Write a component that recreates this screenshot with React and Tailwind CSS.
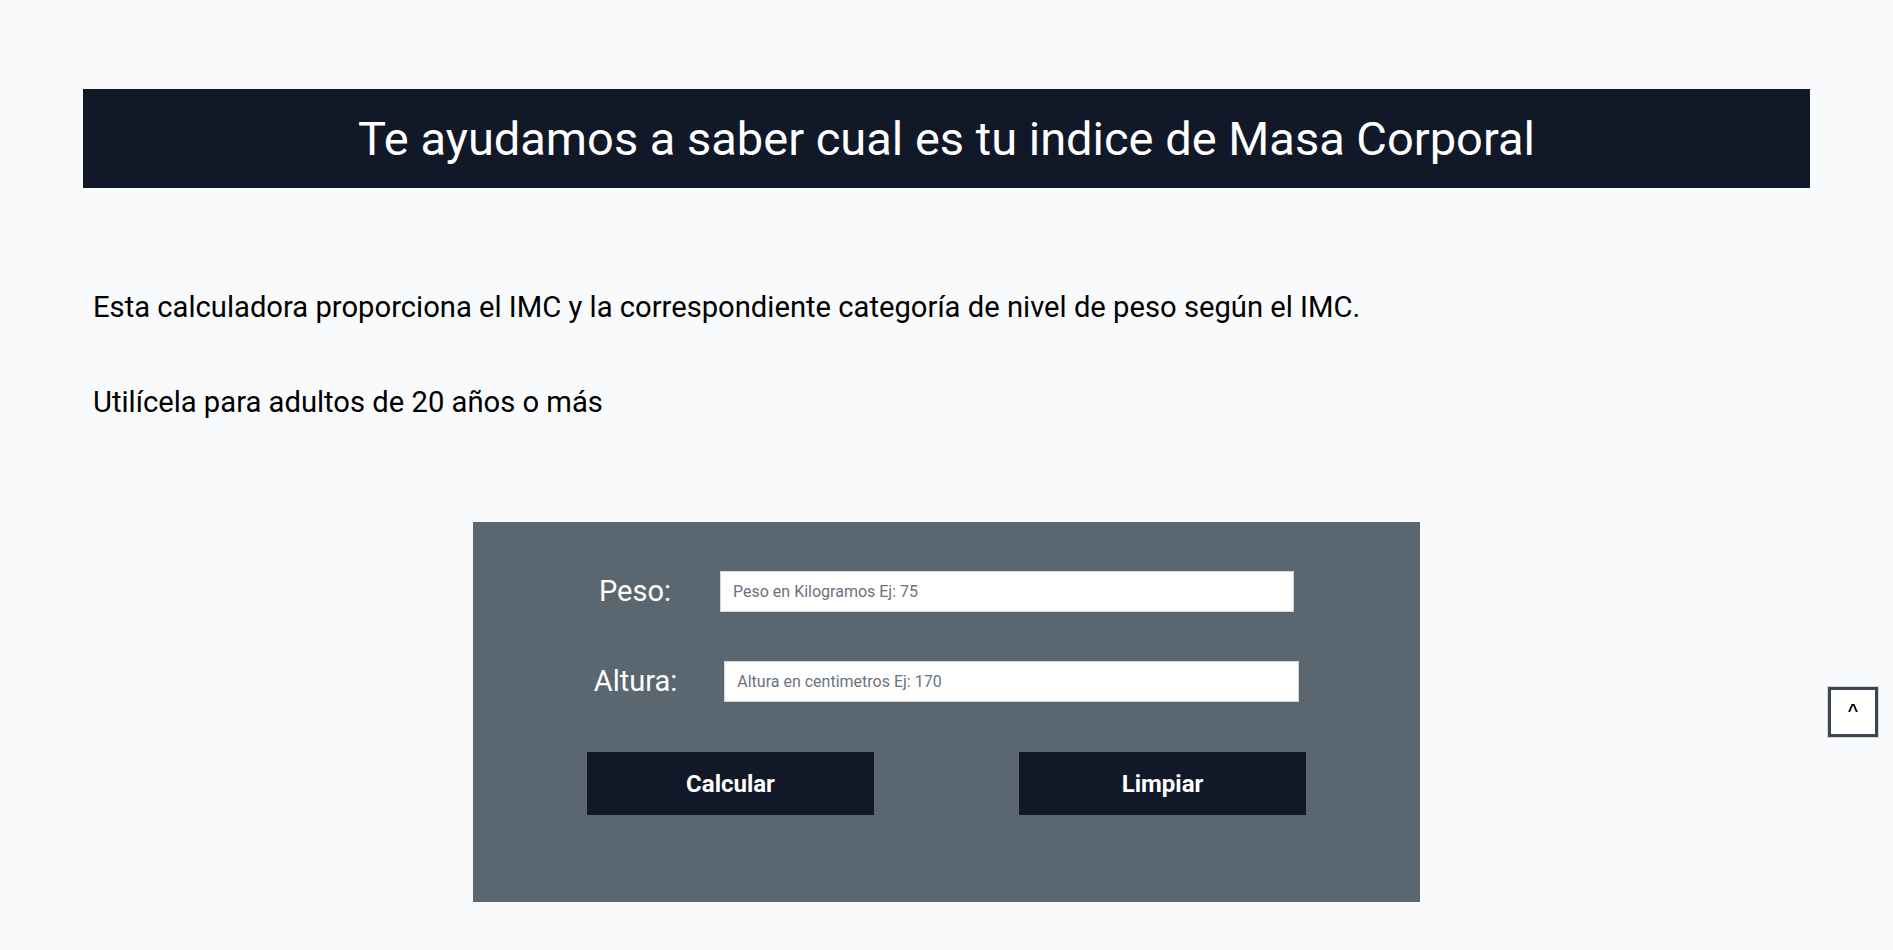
import React, { useState } from 'react';

export default function App() {
  const [peso, setPeso] = useState('');
  const [altura, setAltura] = useState('');

  const limpiar = () => {
    setPeso('');
    setAltura('');
  };

  return (
    <div className="min-h-screen bg-[#f9fafb] pt-[89px] font-['Roboto',sans-serif] text-black">
      {/* Encabezado */}
      <header className="mx-[83px] h-[99px] bg-[#111827] flex items-center justify-center">
        <h1 className="text-[47px] leading-none text-white font-normal">
          Te ayudamos a saber cual es tu indice de Masa Corporal
        </h1>
      </header>

      <section className="mx-[83px] px-[10px] pt-[100px] text-[29.2px] leading-[39px]">
        <p>Esta calculadora proporciona el IMC y la correspondiente categoría de nivel de peso según el IMC.</p>
        <p className="mt-[56px]">Utilícela para adultos de 20 años o más</p>
      </section>

      {/* Calculadora */}
      <div className="w-1/2 mx-auto mt-[100px] bg-[#5a6670] pt-[48px] pb-[87px]">
        <div className="flex items-center justify-center gap-[49px]">
          <label className="text-[29px] text-white">Peso:</label>
          <input
            value={peso}
            onChange={(e) => setPeso(e.target.value)}
            placeholder="Peso en Kilogramos Ej: 75"
            className="w-[574px] h-[41px] bg-white border border-gray-300 px-[12px] text-[16px] text-gray-800 placeholder:text-[#6b7280] outline-none"
          />
        </div>
        <div className="flex items-center justify-center gap-[47px] mt-[46px]">
          <label className="text-[29px] text-white">Altura:</label>
          <input
            value={altura}
            onChange={(e) => setAltura(e.target.value)}
            placeholder="Altura en centimetros Ej: 170"
            className="w-[575px] h-[41px] bg-white border border-gray-300 px-[12px] text-[16px] text-gray-800 placeholder:text-[#6b7280] outline-none"
          />
        </div>
        <div className="flex justify-center gap-[145px] mt-[49px]">
          <button className="w-[287px] h-[63px] bg-[#111827] text-white text-[24px] font-bold">Calcular</button>
          <button onClick={limpiar} className="w-[287px] h-[63px] bg-[#111827] text-white text-[24px] font-bold">Limpiar</button>
        </div>
      </div>

      {/* Volver arriba */}
      <button className="fixed right-[15px] top-[687px] w-[50px] h-[50px] bg-white border-[3px] border-[#3d4452] ring-1 ring-gray-300 flex items-start justify-center pt-[8px] text-[18px] font-bold text-black font-['Liberation_Sans',sans-serif]">
        ^
      </button>
    </div>
  );
}
